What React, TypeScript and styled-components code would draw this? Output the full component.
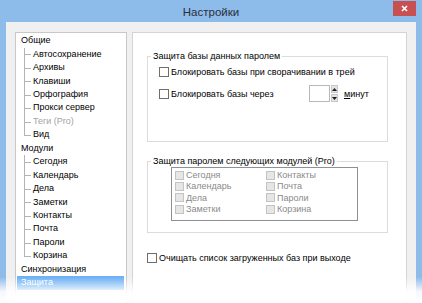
import React from 'react';
import styled, { createGlobalStyle } from 'styled-components';

const GlobalStyle = createGlobalStyle`
  html, body {
    margin: 0;
    padding: 0;
    background: #ffffff;
  }
  body {
    font-family: "Liberation Sans", Arial, sans-serif;
    font-size: 9px;
    color: #000;
  }
`;

const Window = styled.div`
  position: relative;
  width: 422px;
  height: 303px;
  box-sizing: border-box;
  padding: 0 6px;
  background: #8dbbea;
  display: flex;
  flex-direction: column;
  overflow: hidden;
`;

const TitleBar = styled.div`
  height: 22px;
  flex: none;
  display: grid;
  grid-template-columns: 1fr auto 1fr;
  align-items: center;
`;

const Title = styled.div`
  grid-column: 2;
  font-size: 11.5px;
  color: #2a2f38;
  padding-top: 2px;
`;

const CloseButton = styled.div`
  grid-column: 3;
  justify-self: end;
  align-self: start;
  margin-top: 1px;
  width: 23px;
  height: 15px;
  background: #c75050;
  display: flex;
  align-items: center;
  justify-content: center;
`;

const Client = styled.div`
  flex: 1;
  background: #f0f0f0;
  display: flex;
  gap: 5px;
  padding: 10px 9px 0 9px;
  min-height: 0;
`;

const TreePanel = styled.div`
  width: 112px;
  box-sizing: border-box;
  background: #fff;
  border: 1px solid #c8c8c8;
  border-bottom: none;
  padding-top: 1.3px;
`;

const TreeRow = styled.div<{ $selected?: boolean; $disabled?: boolean }>`
  height: 13.44px;
  line-height: 13.44px;
  padding-left: 4px;
  margin: 0 2px 0 1px;
  white-space: nowrap;
  color: ${(p) => (p.$selected ? '#ffffff' : p.$disabled ? '#a3a3a3' : '#000')};
  background: ${(p) => (p.$selected ? 'linear-gradient(#6eb2f6, #5aa6f2)' : 'transparent')};
`;

const ChildGroup = styled.div`
  margin-left: 8px;
`;

const ChildRow = styled.div<{ $last?: boolean; $disabled?: boolean }>`
  position: relative;
  height: 13.44px;
  line-height: 13.44px;
  padding-left: 9px;
  white-space: nowrap;
  color: ${(p) => (p.$disabled ? '#a3a3a3' : '#000')};

  &::before {
    content: '';
    position: absolute;
    left: 0;
    top: 0;
    width: 1px;
    height: ${(p) => (p.$last ? '50%' : '100%')};
    background: #b4b4b4;
  }
  &::after {
    content: '';
    position: absolute;
    left: 0;
    top: 50%;
    width: 7px;
    height: 1px;
    background: #b4b4b4;
  }
`;

const SettingsPanel = styled.div`
  flex: 1;
  box-sizing: border-box;
  background: #fff;
  border: 1px solid #d4d4d4;
  border-bottom: none;
  padding: 17px 0 0 14px;
`;

const GroupBox = styled.fieldset`
  width: 241px;
  box-sizing: border-box;
  margin: 0;
  padding: 0;
  border: 1px solid #dcdcdc;
  min-inline-size: 0;

  & + & {
    margin-top: 13px;
  }
`;

const Legend = styled.legend`
  margin-left: 3px;
  padding: 0 2px;
  line-height: 12px;
  color: #000;
`;

const GroupBody = styled.div<{ $pt: number; $pb: number; $pl: number }>`
  padding: ${(p) => `${p.$pt}px 0 ${p.$pb}px ${p.$pl}px`};
  display: flex;
  flex-direction: column;
  gap: 6px;
`;

const CheckRow = styled.label<{ $h?: number }>`
  display: flex;
  align-items: center;
  height: ${(p) => p.$h ?? 14}px;
  white-space: nowrap;
`;

const Box = styled.span<{ $disabled?: boolean; $size?: number }>`
  flex: none;
  width: ${(p) => p.$size ?? 10}px;
  height: ${(p) => p.$size ?? 10}px;
  box-sizing: border-box;
  border: 1px solid ${(p) => (p.$disabled ? '#c3c3c3' : '#6e6e6e')};
  background: ${(p) => (p.$disabled ? '#e6e6e6' : '#fff')};
  margin-right: 2px;
`;

const LockLabel = styled.span`
  width: 138px;
`;

const Spin = styled.div`
  display: flex;
  align-items: stretch;
  height: 17px;
`;

const SpinInput = styled.div`
  width: 21px;
  box-sizing: border-box;
  border: 1px solid #b5b8bf;
  background: #fff;
`;

const SpinArrows = styled.div`
  width: 7px;
  margin-left: 1px;
  display: flex;
  flex-direction: column;
  gap: 1px;
`;

const SpinButton = styled.div`
  flex: 1;
  background: #e3e3e3;
  border: 1px solid #c9c9c9;
  display: flex;
  align-items: center;
  justify-content: center;
`;

const Minutes = styled.span`
  margin-left: 6px;

  u {
    text-decoration: underline;
  }
`;

const ModuleList = styled.div`
  width: 187px;
  height: 54px;
  box-sizing: border-box;
  margin-left: 23px;
  border: 1px solid #8c9097;
  padding: 1.4px 0 0 3px;
  display: grid;
  grid-template-columns: 91px 1fr;
  grid-template-rows: repeat(4, 11.33px);
  grid-auto-flow: column;
`;

const ModuleItem = styled.div`
  display: flex;
  align-items: center;
  color: #8a8a8a;
  white-space: nowrap;
`;

const ClearRow = styled(CheckRow)`
  margin-top: 18px;
`;

const Fade = styled.div`
  position: absolute;
  left: 0;
  right: 0;
  bottom: 0;
  height: 26px;
  background: linear-gradient(rgba(255, 255, 255, 0), rgba(255, 255, 255, 0.9) 55%, #fff);
  pointer-events: none;
`;

const general = ['Автосохранение', 'Архивы', 'Клавиши', 'Орфография', 'Прокси сервер', 'Теги (Pro)', 'Вид'];
const modules = ['Сегодня', 'Календарь', 'Дела', 'Заметки', 'Контакты', 'Почта', 'Пароли', 'Корзина'];

const Arrow: React.FC<{ up?: boolean }> = ({ up }) => (
  <svg width="5" height="3" viewBox="0 0 5 3">
    <path d={up ? 'M0 3 L2.5 0 L5 3 Z' : 'M0 0 L2.5 3 L5 0 Z'} fill="#1e1e1e" />
  </svg>
);

const App: React.FC = () => {
  return (
    <>
      <GlobalStyle />
      <Window>
        <TitleBar>
          <Title>Настройки</Title>
          <CloseButton>
            <svg width="7" height="7" viewBox="0 0 7 7">
              <path d="M1 1 L6 6 M6 1 L1 6" stroke="#fff" strokeWidth="1.7" />
            </svg>
          </CloseButton>
        </TitleBar>
        <Client>
          <TreePanel>
            <TreeRow>Общие</TreeRow>
            <ChildGroup>
              {general.map((item, i) => (
                <ChildRow key={item} $last={i === general.length - 1} $disabled={item === 'Теги (Pro)'}>
                  {item}
                </ChildRow>
              ))}
            </ChildGroup>
            <TreeRow>Модули</TreeRow>
            <ChildGroup>
              {modules.map((item, i) => (
                <ChildRow key={item} $last={i === modules.length - 1}>
                  {item}
                </ChildRow>
              ))}
            </ChildGroup>
            <TreeRow>Синхронизация</TreeRow>
            <TreeRow $selected>Защита</TreeRow>
          </TreePanel>
          <SettingsPanel>
            <GroupBox>
              <Legend>Защита базы данных паролем</Legend>
              <GroupBody $pt={3} $pb={39} $pl={11}>
                <CheckRow>
                  <Box />
                  Блокировать базы при сворачивании в трей
                </CheckRow>
                <CheckRow $h={17}>
                  <Box />
                  <LockLabel>Блокировать базы через</LockLabel>
                  <Spin>
                    <SpinInput />
                    <SpinArrows>
                      <SpinButton>
                        <Arrow up />
                      </SpinButton>
                      <SpinButton>
                        <Arrow />
                      </SpinButton>
                    </SpinArrows>
                  </Spin>
                  <Minutes>
                    <u>м</u>инут
                  </Minutes>
                </CheckRow>
              </GroupBody>
            </GroupBox>
            <GroupBox>
              <Legend>Защита паролем следующих модулей (Pro)</Legend>
              <GroupBody $pt={0} $pb={11} $pl={0}>
                <ModuleList>
                  {modules.map((item) => (
                    <ModuleItem key={item}>
                      <Box $disabled $size={9} />
                      {item}
                    </ModuleItem>
                  ))}
                </ModuleList>
              </GroupBody>
            </GroupBox>
            <ClearRow>
              <Box />
              Очищать список загруженных баз при выходе
            </ClearRow>
          </SettingsPanel>
        </Client>
        <Fade />
      </Window>
    </>
  );
};

export default App;
